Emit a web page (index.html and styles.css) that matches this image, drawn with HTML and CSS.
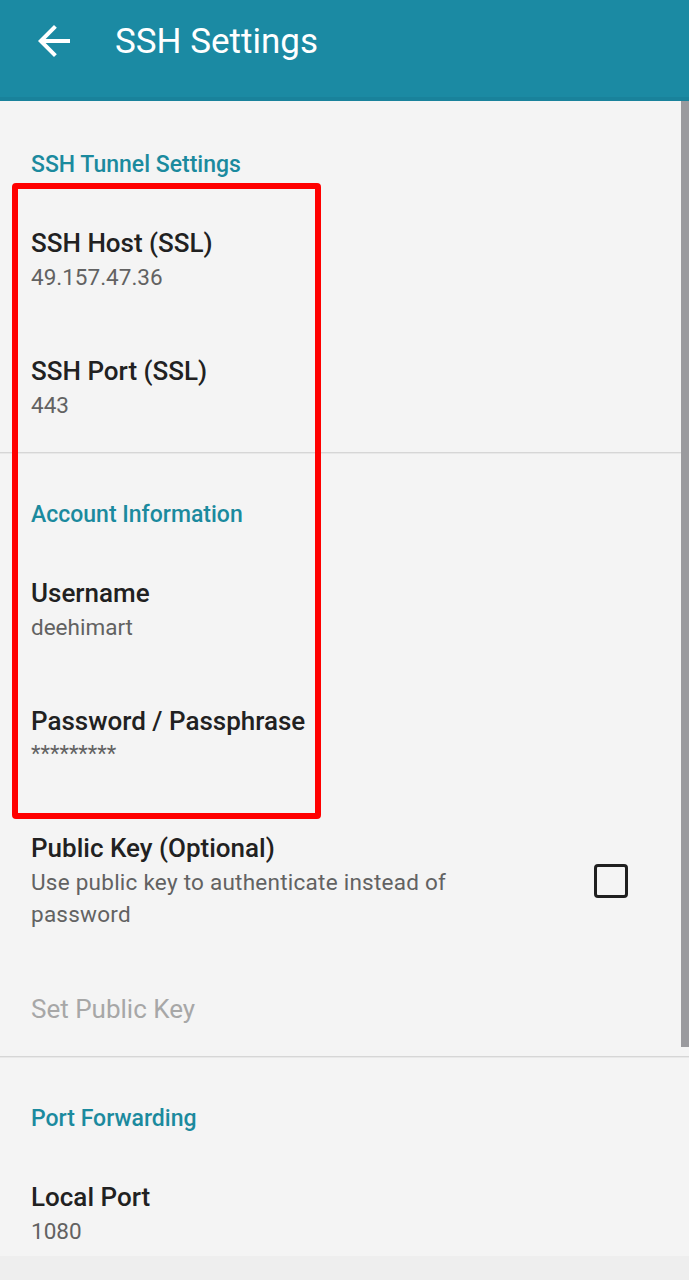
FILE: index.html
```html
<!DOCTYPE html>
<html>
<head>
<meta charset="utf-8">
<link rel="stylesheet" href="styles.css">
</head>
<body>
<div class="screen">
  <header class="appbar">
    <svg class="back" width="48" height="48" viewBox="0 0 24 24"><path d="M20 11H7.83l5.59-5.59L12 4l-8 8 8 8 1.41-1.41L7.83 13H20v-2z" fill="#fff"/></svg>
    <div class="title">SSH Settings</div>
  </header>
  <main class="content">
    <div class="category">SSH Tunnel Settings</div>
    <div class="pref">
      <div class="pref-title">SSH Host (SSL)</div>
      <div class="pref-summary">49.157.47.36</div>
    </div>
    <div class="pref">
      <div class="pref-title">SSH Port (SSL)</div>
      <div class="pref-summary">443</div>
    </div>
    <div class="divider"></div>
    <div class="category">Account Information</div>
    <div class="pref">
      <div class="pref-title">Username</div>
      <div class="pref-summary">deehimart</div>
    </div>
    <div class="pref">
      <div class="pref-title">Password / Passphrase</div>
      <div class="pref-summary stars">*********</div>
    </div>
    <div class="pref pref-row">
      <div class="pref-text">
        <div class="pref-title">Public Key (Optional)</div>
        <div class="pref-summary wide">Use public key to authenticate instead of password</div>
      </div>
      <div class="checkbox"></div>
    </div>
    <div class="pref pref-single">
      <div class="pref-title disabled">Set Public Key</div>
    </div>
    <div class="divider"></div>
    <div class="category cat-pf">Port Forwarding</div>
    <div class="pref">
      <div class="pref-title">Local Port</div>
      <div class="pref-summary">1080</div>
    </div>
    <div class="scrollbar"></div>
    <div class="highlight"></div>
  </main>
  <footer class="bottom"></footer>
</div>
</body>
</html>
```
FILE: styles.css
```css
* { box-sizing: border-box; }
html, body { margin: 0; padding: 0; }
body {
  width: 689px;
  height: 1280px;
  overflow: hidden;
  background: #eeeeee;
  font-family: Roboto, "Noto Sans", sans-serif;
}
.screen {
  display: flex;
  flex-direction: column;
  height: 1280px;
}
.appbar {
  height: 101px;
  flex: none;
  background: #1b8aa3;
  display: flex;
  align-items: flex-start;
  padding-top: 17px;
  padding-left: 30px;
  box-shadow: inset 0 -4px 0 #19829b, inset 0 -1px 0 #8fc3d0;
}
.back { flex: none; display: block; }
.title {
  color: #ffffff;
  font-size: 35px;
  line-height: 48px;
  margin-left: 37px;
  margin-top: 1px;
}
.content {
  flex: 1;
  position: relative;
  overflow: hidden;
  background: #f4f4f4;
}
.category {
  color: #1b8a9e;
  font-size: 23px;
  font-weight: 500;
  line-height: 28px;
  padding: 50px 31px 17px;
}
.divider + .category { padding-top: 48px; }
.pref {
  padding: 31px 31px;
}
.pref-title {
  color: #212121;
  font-size: 26px;
  font-weight: 500;
  line-height: 32px;
}
.pref-summary {
  color: #626262;
  font-size: 22.5px;
  line-height: 32px;
  margin-top: 2px;
}
.pref-summary.wide {
  letter-spacing: 0.25px;
}
.pref-summary.stars {
  font-size: 22px;
  line-height: 30px;
  margin-top: 2px;
}
.pref-row {
  display: flex;
  align-items: center;
  padding-top: 32px;
  padding-bottom: 30px;
  padding-right: 61px;
}
.pref-text {
  flex: 1;
  padding-right: 100px;
}
.checkbox {
  flex: none;
  width: 34px;
  height: 34px;
  border: 3px solid #1f1f1f;
  border-radius: 4px;
}
.pref-single {
  padding: 33px 31px 31px;
}
.pref-title.disabled {
  color: #a7a7a7;
  font-weight: 400;
}
.divider {
  height: 1px;
  background: #d6d6d6;
  box-shadow: 0 1px 0 #e8e8e8;
}
.scrollbar {
  position: absolute;
  top: 0;
  right: 0;
  width: 8px;
  height: 946px;
  background: #9a9a9e;
}
.highlight {
  position: absolute;
  left: 12px;
  top: 82px;
  width: 309px;
  height: 636px;
  border: 6px solid #ff0000;
  border-radius: 4px;
}
.bottom {
  flex: none;
  height: 24px;
  background: #eeeeee;
}
```
